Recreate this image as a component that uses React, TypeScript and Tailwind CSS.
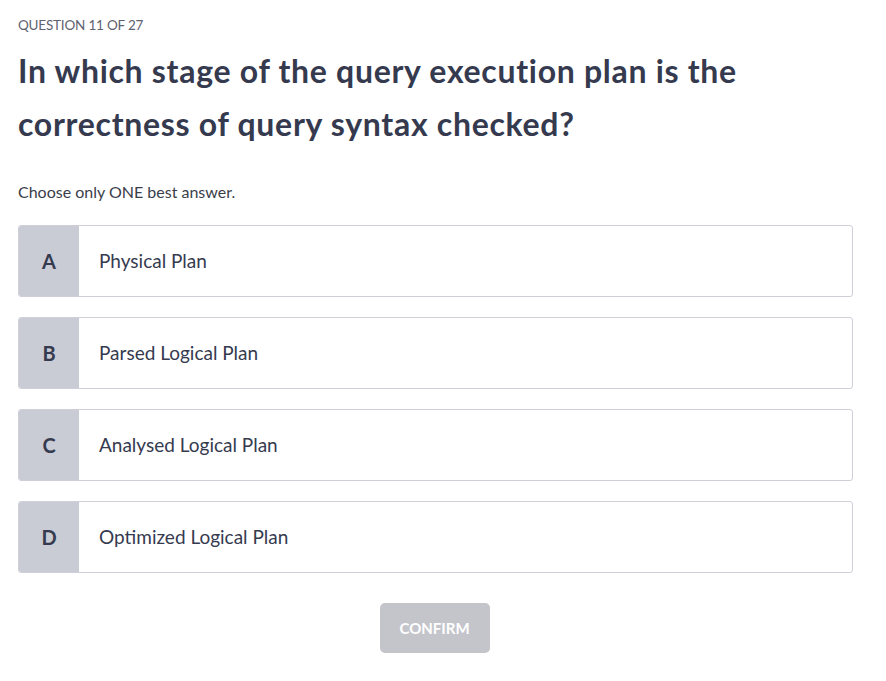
import React from "react";

const options = [
  { letter: "A", text: "Physical Plan" },
  { letter: "B", text: "Parsed Logical Plan" },
  { letter: "C", text: "Analysed Logical Plan" },
  { letter: "D", text: "Optimized Logical Plan" },
];

export default function App() {
  return (
    <div
      className="w-[886px] h-[681px] bg-white px-[18px] pt-[15px]"
      style={{ fontFamily: "Lato, 'Open Sans', sans-serif" }}
    >
      <div className="w-[835px]">
        <div className="text-[13.5px] leading-[20px] text-[#5f6270] tracking-[-0.2px]">
          QUESTION 11 OF 27
        </div>
        <h1 className="mt-[9px] max-w-[760px] text-[32px] leading-[53px] font-bold tracking-[0.7px] text-[#353a4f]">
          In which stage of the query execution plan is the correctness of query syntax checked?
        </h1>
        <div className="mt-[31px] text-[16px] leading-[22px] text-[#3a3d4a]">
          Choose only ONE best answer.
        </div>
        <div className="mt-[22px] flex flex-col gap-[20px]">
          {options.map((o) => (
            <div
              key={o.letter}
              className="flex h-[72px] rounded-[3px] border border-[#cfd0d9] overflow-hidden bg-white"
            >
              <div className="w-[60px] bg-[#c9cbd5] flex items-center justify-center text-[20px] font-bold text-[#353a4f]">
                {o.letter}
              </div>
              <div className="flex items-center pl-[20px] text-[19px] text-[#353a4f]">
                {o.text}
              </div>
            </div>
          ))}
        </div>
        <div className="mt-[30px] flex justify-center">
          <button className="w-[110px] h-[50px] rounded-[5px] bg-[#c4c5cb] text-white font-bold text-[15px] -translate-x-[1px]">
            CONFIRM
          </button>
        </div>
      </div>
    </div>
  );
}
